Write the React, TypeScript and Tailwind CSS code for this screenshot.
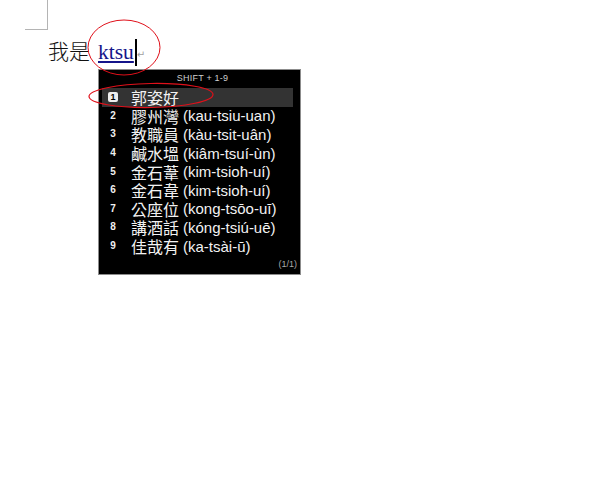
import React from "react";

const rows: { cjk: string; rom: string }[] = [
  { cjk: "郭姿好", rom: "" },
  { cjk: "膠州灣", rom: "(kau-tsiu-uan)" },
  { cjk: "教職員", rom: "(kàu-tsit-uân)" },
  { cjk: "鹹水塭", rom: "(kiâm-tsuí-ùn)" },
  { cjk: "金石葦", rom: "(kim-tsio\u0358h-uí)" },
  { cjk: "金石韋", rom: "(kim-tsio\u0358h-uí)" },
  { cjk: "公座位", rom: "(kong-tsōo-uī)" },
  { cjk: "講酒話", rom: "(kóng-tsiú-uē)" },
  { cjk: "佳哉有", rom: "(ka-tsài-ū)" },
];

export default function App() {
  return (
    <div className="relative w-[600px] h-[480px] bg-white overflow-hidden">
      {/* page corner mark */}
      <div className="ml-[25px] w-[23px] h-[30px] border-r border-b border-[#b4b4b4]" />

      {/* text line */}
      <div
        className="pl-[48px] mt-[6px] text-[21px] leading-[28px] text-[#111] whitespace-nowrap"
        style={{ fontFamily: '"Liberation Serif", "Noto Sans CJK TC", serif' }}
      >
        <span style={{ fontFamily: '"Noto Sans CJK TC", sans-serif' }} className="font-light">我是</span>
        <span className="ml-[8px] text-[21.5px] text-[#14148a] underline decoration-[#14148a] underline-offset-[2px]">ktsu</span>
        <span className="inline-block ml-[1px] w-[2px] h-[27px] bg-black align-[-6.5px]" />
        <span
          className="text-[10px] text-[#a0a0a0] align-[1px]"
          style={{ fontFamily: '"DejaVu Sans", sans-serif' }}
        >
          ↵
        </span>
      </div>

      {/* candidate popup */}
      <div
        className="absolute left-[98px] top-[69px] w-[203px] h-[206px] bg-black border border-[#8c8c8c] flex flex-col"
        style={{ fontFamily: '"Liberation Sans", "Noto Sans CJK TC", sans-serif' }}
      >
        <div className="h-[18px] flex items-center justify-center pl-[6px] text-[9px] text-[#cfcfcf] tracking-[0.2px]">
          SHIFT + 1-9
        </div>
        <div className="flex flex-col pl-[3px] pr-[7px]">
          {rows.map((r, i) => (
            <div
              key={i}
              className={`h-[18.6px] flex items-center pl-[6px] ${i === 0 ? "bg-[#333333]" : ""}`}
            >
              <div className="w-[10px] flex justify-center">
                {i === 0 ? (
                  <span className="w-[10px] h-[10px] rounded-[2px] bg-[#eeeeee] text-black text-[9px] font-bold leading-[10px] text-center">
                    1
                  </span>
                ) : (
                  <span className="text-[10px] font-bold text-[#f0f0f0] leading-none">{i + 1}</span>
                )}
              </div>
              <div className="ml-[13px] flex items-center whitespace-nowrap text-[#f2f2f2]">
                <span className="text-[16px] leading-none" style={{ fontFamily: '"Noto Sans CJK TC", sans-serif' }}>
                  {r.cjk}
                </span>
                {r.rom && <span className="ml-[4px] text-[15px] leading-none">{r.rom}</span>}
              </div>
            </div>
          ))}
        </div>
        <div className="flex-1 flex items-center justify-end pr-[3px] text-[9px] text-[#a8a8a8]">(1/1)</div>
      </div>

      {/* red annotation ellipses */}
      <svg className="absolute left-0 top-0 pointer-events-none" width="600" height="480">
        <ellipse cx="124" cy="47.5" rx="36" ry="27.5" fill="none" stroke="#e0101a" strokeWidth="1" />
        <ellipse cx="151" cy="95.5" rx="62" ry="12" fill="none" stroke="#e0101a" strokeWidth="1.2" transform="rotate(-1 151 95.5)" />
      </svg>
    </div>
  );
}
